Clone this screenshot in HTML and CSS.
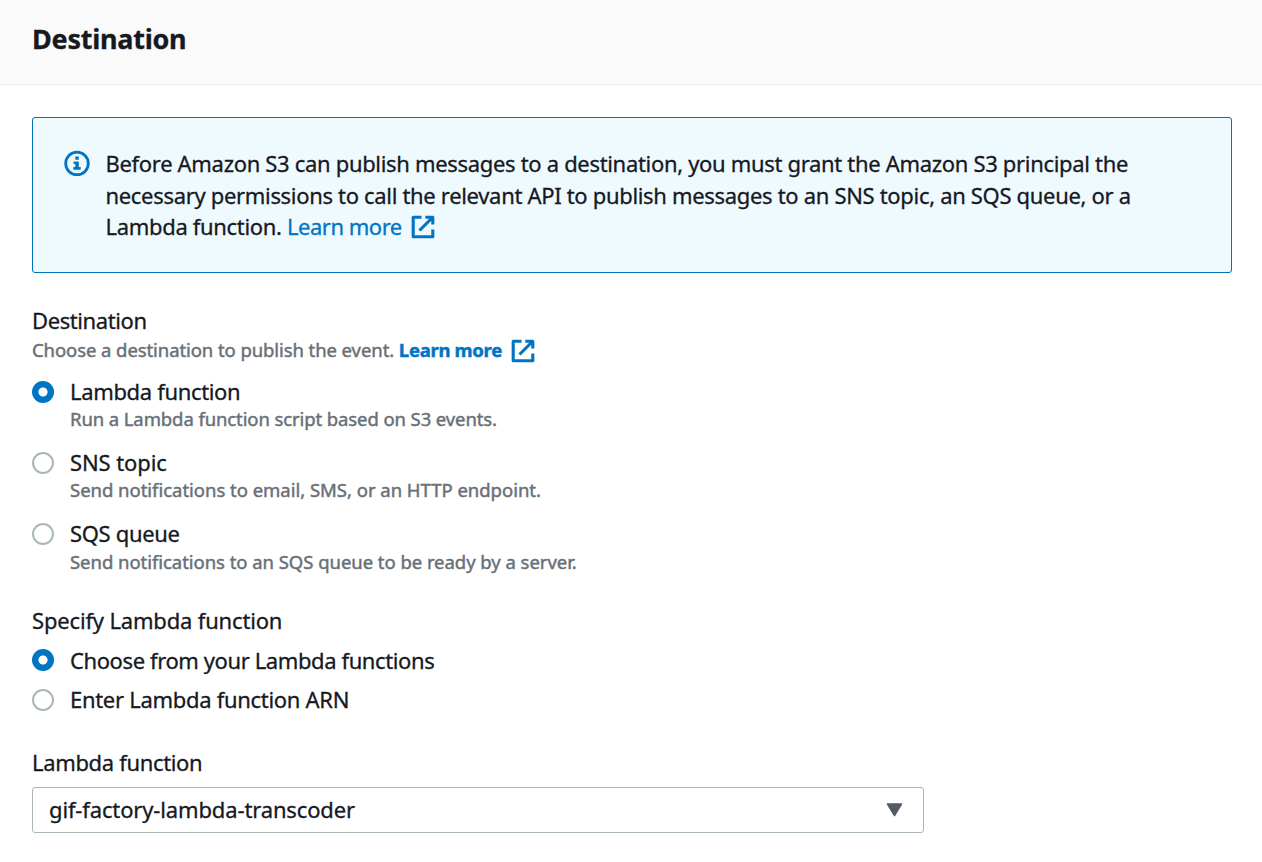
FILE: index.html
```html
<!DOCTYPE html>
<html lang="en">
<head>
<meta charset="utf-8">
<title>Destination</title>
<link rel="stylesheet" href="styles.css">
</head>
<body>
<header class="header"><h1 class="title">Destination</h1></header>
<main class="content">
  <section class="alert">
    <svg class="info-icon" viewBox="0 0 26 26"><circle cx="13" cy="13.4" r="11.3" fill="none" stroke="currentColor" stroke-width="2.8"/><path d="M11.3 6.6h3.5v3.2h-3.5zM9.6 11.4h5.2v5.5h1.9v2.9H9.3v-2.9h2v-2.8H9.6z" fill="currentColor"/></svg>
    <p class="alert-text">Before Amazon S3 can publish messages to a destination, you must grant the Amazon S3 principal the<br>necessary permissions to call the relevant API to publish messages to an SNS topic, an SQS queue, or a<br>Lambda function. <a class="link"><span class="link-text">Learn more</span><svg class="external" viewBox="0 0 24 24"><path d="M10.5 2.2H2.2v19.6H21.8V14.5M21.8 9.5V2.2h-7.5M21.5 2.5L8.5 15.5" fill="none" stroke="currentColor" stroke-width="3.1" stroke-linejoin="round"/></svg></a></p>
  </section>
  <section class="field">
    <h2 class="label label-destination">Destination</h2>
    <p class="hint">Choose a destination to publish the event. <a class="link link-bold"><span class="link-text">Learn more</span><svg class="external" viewBox="0 0 24 24"><path d="M10.5 2.2H2.2v19.6H21.8V14.5M21.8 9.5V2.2h-7.5M21.5 2.5L8.5 15.5" fill="none" stroke="currentColor" stroke-width="3.1" stroke-linejoin="round"/></svg></a></p>
    <div class="options">
      <label class="option"><span class="radio radio-on"></span><span class="option-body"><span class="option-name name-lambda">Lambda function</span><span class="option-note note-lambda">Run a Lambda function script based on S3 events.</span></span></label>
      <label class="option"><span class="radio"></span><span class="option-body"><span class="option-name name-sns">SNS topic</span><span class="option-note note-sns">Send notifications to email, SMS, or an HTTP endpoint.</span></span></label>
      <label class="option"><span class="radio"></span><span class="option-body"><span class="option-name name-sqs">SQS queue</span><span class="option-note note-sqs">Send notifications to an SQS queue to be ready by a server.</span></span></label>
    </div>
  </section>
  <section class="specify">
    <h2 class="label label-specify">Specify Lambda function</h2>
    <div class="choices">
      <label class="option"><span class="radio radio-on"></span><span class="option-name name-choose">Choose from your Lambda functions</span></label>
      <label class="option"><span class="radio"></span><span class="option-name name-enter">Enter Lambda function ARN</span></label>
    </div>
  </section>
  <section class="function">
    <h2 class="label name-lambda">Lambda function</h2>
    <div class="select"><span class="select-value">gif-factory-lambda-transcoder</span><svg class="caret" viewBox="0 0 17 14"><path d="M1.5 1h14L8.5 12.5z" fill="currentColor" stroke="currentColor" stroke-width="1.5" stroke-linejoin="round"/></svg></div>
  </section>
</main>
</body>
</html>
```
FILE: styles.css
```css
* { box-sizing: border-box; }
body { margin: 0; background: #fff; color: #16191f; font: 22px/32px "Noto Sans", sans-serif; -webkit-text-stroke: 0.3px currentColor; }
h1, h2, p { margin: 0; }
.header { height: 85px; padding: 20px 32px; background: #fafafa; border-bottom: 1px solid #e7eaea; }
.title { font-size: 27px; line-height: 38px; font-weight: 700; letter-spacing: -0.25px; white-space: nowrap; }
.content { padding: 32px 30px 0 32px; }
.alert { display: flex; height: 156px; padding: 30px 31px; border: 1px solid #0073bb; border-radius: 3px; background: #effaff; }
.info-icon { flex: none; width: 26px; height: 26px; margin: 2px 16px 0 -0.5px; color: #0075c4; overflow: visible; }
.alert-text { line-height: 31.5px; white-space: nowrap; letter-spacing: -0.32px; }
.link { color: #0075c4; letter-spacing: -0.5px; }
.link-bold { font-weight: 700; letter-spacing: -0.3px; }
.external { width: 24px; height: 24px; margin-left: 9px; vertical-align: -4px; }
.field { margin-top: 31px; }
.label { font-size: 22px; line-height: 32px; font-weight: 400; white-space: nowrap; }
.label-destination { letter-spacing: -0.4px; }
.label-specify { letter-spacing: -0.17px; }
.hint { height: 28px; font-size: 18.5px; line-height: 27px; color: #687078; letter-spacing: -0.08px; white-space: nowrap; -webkit-text-stroke-width: 0.45px; }
.hint .external { vertical-align: -6px; }
.options { display: flex; flex-direction: column; gap: 15px; margin-top: 12px; }
.option { display: flex; gap: 16px; white-space: nowrap; }
.radio { flex: none; width: 22px; height: 22px; margin-top: 5px; border: 2px solid #aab7b8; border-radius: 50%; background: #fff; }
.radio-on { border: 0; background: radial-gradient(circle, #fff 4.2px, #0075c4 4.9px); }
.option-body { display: flex; flex-direction: column; }
.option-name { line-height: 31px; }
.name-lambda { letter-spacing: -0.34px; }
.name-sns { letter-spacing: -0.1px; }
.name-sqs { letter-spacing: -0.34px; }
.name-choose { letter-spacing: -0.4px; }
.name-enter { letter-spacing: -0.3px; }
.option-note { font-size: 18.5px; line-height: 27px; margin-top: -2px; color: #687078; letter-spacing: -0.1px; -webkit-text-stroke-width: 0.45px; }
.note-sns { letter-spacing: -0.02px; }
.note-sqs { margin-top: -1px; letter-spacing: -0.04px; }
.specify { margin-top: 29px; }
.choices { display: flex; flex-direction: column; gap: 8px; margin-top: 9px; }
.choices .radio-on { margin-top: 4px; }
.function { margin-top: 31px; }
.select { display: flex; align-items: center; justify-content: space-between; width: 892px; height: 46px; margin-top: 9px; padding: 0 20px 0 16px; border: 1px solid #aab7b8; border-radius: 3px; }
.select-value { line-height: 30px; padding-bottom: 2px; letter-spacing: -0.14px; }
.caret { width: 17px; height: 14px; color: #545b64; }
```
